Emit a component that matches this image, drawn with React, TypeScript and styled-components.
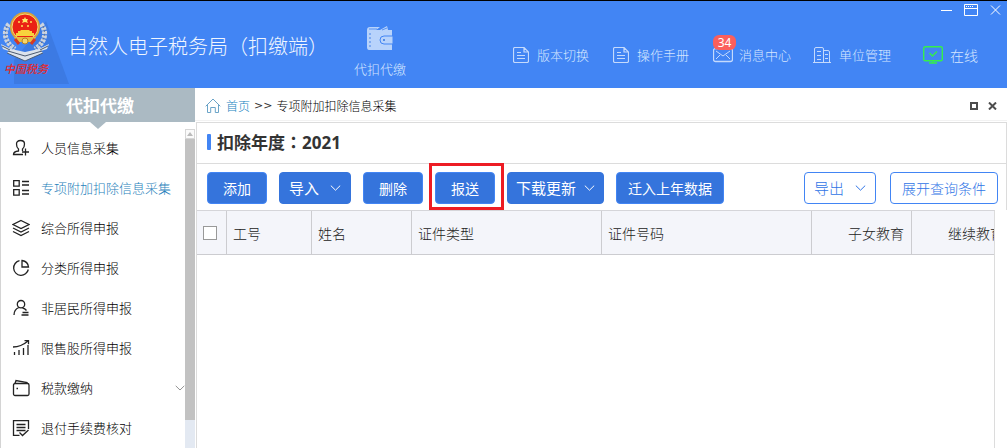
import React from 'react';
import styled, { createGlobalStyle } from 'styled-components';

const GlobalStyle = createGlobalStyle`
  *, *::before, *::after { box-sizing: border-box; }
  body { margin: 0; background: #fff; }
  body, button, input, table {
    font-family: "Noto Sans CJK SC", "Noto Sans", sans-serif;
    font-weight: 300;
  }
  a { color: inherit; text-decoration: none; }
  svg { display: block; flex: none; }
`;

const Page = styled.div`
  display: flex;
  flex-direction: column;
  min-height: 100vh;
  overflow: hidden;
`;

/* ---------- title bar ---------- */

const Header = styled.header`
  display: flex;
  height: 88px;
  border-top: 1px solid #000;
  background: #4285f4;
  color: #d5e5ff;
`;

const Brand = styled.div`
  position: relative;
  width: 68px;
  flex: none;
`;

const BrandCaption = styled.span`
  position: absolute;
  left: 4px;
  top: 60px;
  font: italic 500 11px/14px "Noto Sans CJK SC", sans-serif;
  color: #e3282c;
  white-space: nowrap;
`;

const AppTitle = styled.h1`
  margin: 0;
  padding-top: 31px;
  font-size: 20px;
  font-weight: 300;
  line-height: 28px;
  color: #f0f6ff;
  white-space: nowrap;
`;

const ModuleTab = styled.a`
  display: flex;
  flex-direction: column;
  align-items: center;
  gap: 7px;
  margin-left: 26px;
  padding-top: 24px;
  font-size: 13px;
  line-height: 20px;
  white-space: nowrap;
`;

const HeaderRight = styled.div`
  display: flex;
  flex-direction: column;
  gap: 24px;
  margin-left: auto;
`;

const WindowControls = styled.div`
  display: flex;
  justify-content: flex-end;
  gap: 12px;
  padding: 3px 6px 0 0;
`;

const GhostButton = styled.button`
  display: flex;
  align-items: center;
  justify-content: center;
  padding: 0;
  border: 0;
  background: none;
  color: inherit;
`;

const HeaderLinks = styled.nav`
  display: flex;
  padding-right: 9px;
`;

const HeaderLink = styled.a<{ $wide?: boolean }>`
  position: relative;
  display: flex;
  align-items: center;
  gap: ${p => (p.$wide ? 7 : 8)}px;
  width: ${p => (p.$wide ? 75 : 100)}px;
  margin-left: ${p => (p.$wide ? 10 : 0)}px;
  font-size: ${p => (p.$wide ? 14 : 13)}px;
  line-height: 30px;
  white-space: nowrap;
`;

const MessageLink = styled(HeaderLink)`
  gap: 6px;
`;

const Badge = styled.span`
  position: absolute;
  left: 0;
  top: -5px;
  width: 23px;
  border-radius: 6px;
  background: #fb5f5c;
  color: #fff;
  font: 400 12px/15px "Noto Sans", sans-serif;
  text-align: center;
`;

/* ---------- body ---------- */

const Body = styled.div`
  display: flex;
  flex: 1;
`;

const Sidebar = styled.aside`
  display: flex;
  flex-direction: column;
  width: 195px;
  flex: none;
`;

const SidebarTitle = styled.h2`
  position: relative;
  margin: 0;
  padding-left: 5px;
  background: #abbac3;
  color: #fff;
  font-size: 17px;
  font-weight: 700;
  line-height: 34px;
  text-align: center;

  &::after {
    content: "";
    position: absolute;
    left: 50%;
    top: 100%;
    margin-left: -8px;
    border: 8px solid transparent;
    border-top: 7px solid #abbac3;
    border-bottom: 0;
  }
`;

const SidebarScroll = styled.div`
  display: flex;
  flex: 1;
  margin-top: 6px;
  border-left: 1px solid #d4d4d4;
`;

const Menu = styled.nav`
  flex: 1;
`;

const MenuItem = styled.a<{ $active?: boolean }>`
  display: flex;
  align-items: center;
  gap: 11px;
  height: 40px;
  padding-left: 11px;
  color: ${p => (p.$active ? '#1f7fbb' : '#000')};
  font-size: 13px;
  line-height: 40px;
  white-space: nowrap;

  & > svg { color: #222; }
  & > svg:last-child { margin-left: auto; color: #888; }
`;

const ScrollTrack = styled.div`
  width: 10px;
  margin-top: 1px;
  background: #e3e9f2;
`;

const ScrollUp = styled.div`
  display: flex;
  align-items: center;
  justify-content: center;
  height: 10px;
  border: 1px solid #d6d6d6;
  background: #fafafa;
`;

const ScrollThumb = styled.div`
  height: 281px;
  background: #c2c2c2;
`;

const Main = styled.main`
  display: flex;
  flex-direction: column;
  flex: 1;
  min-width: 0;
`;

const CrumbBar = styled.div`
  display: flex;
  align-items: center;
  height: 33px;
  padding: 3px 10px 0 10px;
  border-bottom: 1px solid #f2f2f2;
  color: #000;
  font-size: 12px;
  line-height: 20px;
`;

const HomeLink = styled.a`
  display: flex;
  align-items: center;
  gap: 5px;
  color: #1583c0;
`;

const CrumbSeparator = styled.span`
  padding: 0 4px;
  color: #333;
  font: 400 11px/20px "DejaVu Sans", sans-serif;
`;

const TabControls = styled.div`
  display: flex;
  gap: 10px;
  margin-left: auto;
  color: #4d4d4d;
`;

const Panel = styled.section`
  display: flex;
  flex-direction: column;
  flex: 1;
  margin: 1px 0 0 1px;
  border-top: 1px solid #dcdcdc;
  border-left: 1px solid #dcdcdc;
`;

const PanelTitle = styled.h2`
  display: flex;
  align-items: center;
  margin: 0;
  height: 41px;
  padding-left: 10px;
  border-right: 1px solid #dcdcdc;
  border-bottom: 1px solid #dcdcdc;
  color: #333;
  font-family: "Noto Sans", "Noto Sans CJK TC", sans-serif;
  font-size: 17px;
  font-weight: 700;
  line-height: 40px;

  &::before {
    content: "";
    width: 4px;
    height: 16px;
    margin: 0 6px 3px 0;
    border-radius: 1px;
    background: #4285f4;
  }
`;

const Toolbar = styled.div`
  display: flex;
  align-items: center;
  gap: 12px;
  height: 46px;
  padding: 2px 8px 0 10px;
  border-right: 1px solid #dcdcdc;
`;

const Secondary = styled.div`
  display: flex;
  gap: 14px;
  margin-left: auto;
`;

const Button = styled.button<{ $outline?: boolean }>`
  display: flex;
  align-items: center;
  justify-content: center;
  min-width: 60px;
  height: 32px;
  padding: 0 11px;
  border: 1px solid #4285f4;
  border-radius: 4px;
  background: ${p => (p.$outline ? '#fff' : '#3574dc')};
  color: ${p => (p.$outline ? '#2f74e6' : '#fff')};
  font-size: 14px;
  font-weight: ${p => (p.$outline ? 300 : 400)};
  line-height: 30px;
  white-space: nowrap;
`;

const MenuButton = styled(Button)<{ $tight?: boolean }>`
  gap: ${p => (p.$tight ? 8 : 11)}px;
  min-width: 72px;
  padding: 0 ${p => (p.$tight ? 8 : 9)}px;
  border-color: ${p => (p.$outline ? '#4285f4' : '#3574dc')};
  font-size: 15px;
`;

const Highlight = styled.div`
  position: relative;

  &::after {
    content: "";
    position: absolute;
    inset: -9px -9px -6px -6px;
    border: 3px solid #ed1c24;
    pointer-events: none;
  }
`;

const TableArea = styled.div`
  flex: 1;
  margin-right: 12px;
  border-top: 1px solid #d5d5d9;
  border-right: 1px solid #dcdcdc;
  overflow: hidden;
`;

const Table = styled.table`
  width: 100%;
  min-width: 815px;
  table-layout: fixed;
  border-collapse: separate;
  border-spacing: 0;
`;

const HeadCell = styled.th<{ $width?: number; $right?: boolean }>`
  ${p => p.$width && `width: ${p.$width}px;`}
  height: 44px;
  padding: 0 7px 0 6px;
  border-right: 1px solid #ccccd0;
  border-bottom: 1px solid #ccccd0;
  background: #f4f5fa;
  color: #222;
  font-size: 14px;
  font-weight: 300;
  line-height: 20px;
  text-align: ${p => (p.$right ? 'right' : 'left')};
  white-space: nowrap;
`;

const Checkbox = styled.input`
  appearance: none;
  display: block;
  width: 14px;
  height: 14px;
  margin: 0;
  border: 1px solid #999;
  background: #fff;
`;

/* ---------- drawings ---------- */

const Emblem = () => (
  <svg width="69" height="87" viewBox="0 1 69 87" fill="none">
    <path d="M46 21L69 84H14V60z" fill="#3c7ae3" />
    <path d="M9 24C3 31 4 42 15 49M41 24c6 7 5 18-6 25" stroke="#cbd3df" strokeWidth="5" strokeDasharray="3 1" />
    <path d="M7 26c-4 8 0 18 8 23M43 26c4 8 0 18-8 23" stroke="#68768e" strokeWidth="1" strokeDasharray="2 2" />
    <path d="M1 44l10 5 14 3 14-3 10-5-2 5-6 2 2 2-18 8L7 53l2-2-6-2z" fill="#dce3ec" />
    <path d="M7 53l18 8 18-8M8 51l17 5 17-5M2 46l8 4M48 46l-8 4" stroke="#4c5b70" strokeWidth="1" />
    <circle cx="25" cy="27" r="15" fill="#d9a23a" />
    <circle cx="25" cy="27" r="13" fill="#ea2115" stroke="#f6dc72" />
    <path d="M16 33h2v-2h3l-1-1h10l-1 1h3v2h2v3H16z" fill="#f8d33d" />
    <path d="M14 37h22l-3 5H17z" fill="#e7bd44" />
    <circle cx="25" cy="41" r="3" fill="#f6d66b" stroke="#b98220" />
    <path d="M15 39l4 5M35 39l-4 5" stroke="#d83a21" strokeWidth="3" />
    <path d="M25 17l1 2h2l-1 2 1 2-3-1-3 1 1-2-1-2h2z" fill="#ffe866" />
    <g fill="#ffdf58"><circle cx="19" cy="22" r="1" /><circle cx="31" cy="22" r="1" /><circle cx="22" cy="26" r="1" /><circle cx="28" cy="26" r="1" /></g>
  </svg>
);

const WalletLarge = () => (
  <svg width="28" height="27" viewBox="0 0 28 27">
    <path d="M1 5q0-3 3-3h10L10 5h4l7-4 1 4h4v20H3q-2 0-2-3z" fill="#b8d3fb" />
    <path d="M3 4h8M16 5l5-2" stroke="#5591f4" />
    <path d="M4 8v15" stroke="#4684e9" strokeWidth="1" strokeDasharray="2 2" />
    <path d="M27 11H18q-4 0-4 4t4 4h9z" fill="#b8d3fb" stroke="#4285f4" />
    <circle cx="18" cy="15" r="1" fill="#3574dc" />
  </svg>
);

const DocIcon = () => (
  <svg width="16" height="16" viewBox="0 0 16 16" fill="none" stroke="#c5dafc">
    <path d="M11 .5H2Q.5.500.500 2v12Q.5 15.500 2 15.500h12q1.500 0 1.500-1.500V5zM11 .5V5h4.500M4 5.500h4M4 8.500h8M4 11.500h8" strokeWidth="1.200" />
  </svg>
);

const MailIcon = () => (
  <svg width="20" height="16" viewBox="0 0 20 16" fill="none" stroke="#c5dafc">
    <rect x=".5" y="1.500" width="19" height="13" rx="2" strokeWidth="1.300" />
    <path d="M3 4l7 5 7-5M3 12l4-4M17 12l-4-4" />
  </svg>
);

const BuildingIcon = () => (
  <svg width="18" height="16" viewBox="0 0 18 16" fill="none" stroke="#c5dafc">
    <path d="M1.500 15V2q0-1.500 1.500-1.500h6q1.500 0 1.500 1.500v13M10.500 3.500H15q1.500 0 1.500 1.500v10M0 15.500h18M4 4.500h4M4 8.500h4M4 12.500h4M12 7.500h3M12 11.500h3" />
  </svg>
);

const OnlineIcon = () => (
  <svg width="20" height="18" viewBox="0 0 20 18" fill="none" stroke="#35ef4a">
    <rect x=".7" y=".7" width="18.600" height="14" rx="1.500" strokeWidth="1.400" />
    <path d="M6.500 7l3 3 4.500-4.500M10 15v2M6 17h8" strokeWidth="1.400" />
  </svg>
);

const HomeIcon = () => (
  <svg width="16" height="16" viewBox="0 0 16 16" fill="none" stroke="#6ba4c8">
    <path d="M.7 8.300L8 1l7.300 7.300M2.500 7v7.500h3.200V9.500h4.600v5h3.200V7" />
  </svg>
);

const Chevron = ({ width = 11 }: { width?: number }) => (
  <svg width={width} height="6" viewBox="0 0 11 6" fill="none" stroke="currentColor">
    <path d="M.8.600l4.700 4.600L10.200.600" />
  </svg>
);

const MenuIcon = ({ children }: { children: React.ReactNode }) => (
  <svg width="18" height="18" viewBox="0 0 18 18" fill="none" stroke="currentColor" strokeWidth="1.300">
    {children}
  </svg>
);

const menu = [
  { label: '人员信息采集', icon: <path d="M11 15.500H1.500q0-3 5-3.500V10Q4.500 8.500 4.500 5 4.500 1.500 8.500 1.500T12.500 5q0 3.500-2 5v2M13.500 9.500v7M10 13h7" /> },
  { label: '专项附加扣除信息采集', active: true, icon: <path d="M1.700 1.700h5.500v5.500H1.700zM1.700 10.700h5.500v5.500H1.700zM10 2.500h7M10 6h7M10 11.500h7M10 15h7" /> },
  { label: '综合所得申报', icon: <path d="M9 1.500l8 4-8 4-8-4zM1 9l8 4 8-4M1 12.500l8 4 8-4" /> },
  { label: '分类所得申报', icon: <path d="M7.500 1.700a7.400 7.400 0 1 0 8.800 8.800M10 1.500V8h6.500Q16 2.500 10 1.500z" /> },
  { label: '非居民所得申报', icon: <><circle cx="9" cy="5.200" r="3.700" /><path d="M7 8.500Q2 10.500 2 16M10.500 9q2.500.5 4 2.500M10.500 13.500h6M9.500 16h7" /></> },
  { label: '限售股所得申报', icon: <path d="M1 8q8 0 15-6M12.500 1.700h4v3.500M2.500 16v-3M7 16v-5M11.500 16V9M16 16V6" /> },
  { label: '税款缴纳', expandable: true, icon: <><path d="M3 4.500l1-3 11 2v1.500" /><rect x="1.500" y="4.500" width="15.500" height="12" rx="1.500" /><path d="M4.500 9.500h1.500" /></> },
  { label: '退付手续费核对', icon: <path d="M16.500 10V1.700h-15v14.600h6M4.500 5.500h9M4.500 8.500h9M4.500 11.500h9M7.500 13.500l3 3 6-5.500" /> },
];

export default function App() {
  return (
    <Page>
      <GlobalStyle />
      <Header>
        <Brand>
          <Emblem />
          <BrandCaption>中国税务</BrandCaption>
        </Brand>
        <AppTitle>自然人电子税务局（扣缴端）</AppTitle>
        <ModuleTab href="#module"><WalletLarge />代扣代缴</ModuleTab>
        <HeaderRight>
          <WindowControls>
            <GhostButton aria-label="最小化">
              <svg width="11" height="12"><path d="M0 6.500h11" stroke="#fff" /></svg>
            </GhostButton>
            <GhostButton aria-label="最大化">
              <svg width="14" height="12" fill="none" stroke="#fff"><path d="M.5.500h13v11H.5zM0 4.500h14" /><path d="M2 2.500h8" strokeDasharray="1 1" /></svg>
            </GhostButton>
            <GhostButton aria-label="关闭">
              <svg width="11" height="12" stroke="#fff"><path d="M1 1.500l9 9M10 1.500l-9 9" /></svg>
            </GhostButton>
          </WindowControls>
          <HeaderLinks>
            <HeaderLink href="#version"><DocIcon />版本切换</HeaderLink>
            <HeaderLink href="#manual"><DocIcon />操作手册</HeaderLink>
            <MessageLink href="#messages"><MailIcon />消息中心<Badge>34</Badge></MessageLink>
            <HeaderLink href="#units"><BuildingIcon />单位管理</HeaderLink>
            <HeaderLink href="#status" $wide><OnlineIcon />在线</HeaderLink>
          </HeaderLinks>
        </HeaderRight>
      </Header>

      <Body>
        <Sidebar>
          <SidebarTitle>代扣代缴</SidebarTitle>
          <SidebarScroll>
            <Menu>
              {menu.map(item => (
                <MenuItem key={item.label} href="#menu" $active={item.active}>
                  <MenuIcon>{item.icon}</MenuIcon>
                  <span>{item.label}</span>
                  {item.expandable && <Chevron width={10} />}
                </MenuItem>
              ))}
            </Menu>
            <ScrollTrack>
              <ScrollUp><svg width="6" height="4"><path d="M0 4l3-4 3 4z" fill="#bbb" /></svg></ScrollUp>
              <ScrollThumb />
            </ScrollTrack>
          </SidebarScroll>
        </Sidebar>

        <Main>
          <CrumbBar>
            <HomeLink href="#home"><HomeIcon />首页</HomeLink>
            <CrumbSeparator>&gt;&gt;</CrumbSeparator>
            <span>专项附加扣除信息采集</span>
            <TabControls>
              <GhostButton aria-label="还原">
                <svg width="8" height="8" fill="none" stroke="currentColor" strokeWidth="2"><path d="M1 1h6v6H1z" /></svg>
              </GhostButton>
              <GhostButton aria-label="关闭标签">
                <svg width="9" height="8" stroke="currentColor" strokeWidth="2"><path d="M1 .5l7 7M8 .5l-7 7" /></svg>
              </GhostButton>
            </TabControls>
          </CrumbBar>
          <Panel>
            <PanelTitle>扣除年度：2021</PanelTitle>
            <Toolbar>
              <Button>添加</Button>
              <MenuButton>导入<Chevron /></MenuButton>
              <Button>删除</Button>
              <Highlight><Button>报送</Button></Highlight>
              <MenuButton $tight>下载更新<Chevron /></MenuButton>
              <Button>迁入上年数据</Button>
              <Secondary>
                <MenuButton $outline>导出<Chevron /></MenuButton>
                <Button $outline>展开查询条件</Button>
              </Secondary>
            </Toolbar>
            <TableArea>
              <Table>
                <thead>
                  <tr>
                    <HeadCell $width={30}><Checkbox type="checkbox" aria-label="全选" /></HeadCell>
                    <HeadCell $width={85}>工号</HeadCell>
                    <HeadCell $width={100}>姓名</HeadCell>
                    <HeadCell $width={190}>证件类型</HeadCell>
                    <HeadCell $width={210}>证件号码</HeadCell>
                    <HeadCell $width={100} $right>子女教育</HeadCell>
                    <HeadCell $right>继续教育</HeadCell>
                  </tr>
                </thead>
              </Table>
            </TableArea>
          </Panel>
        </Main>
      </Body>
    </Page>
  );
}
